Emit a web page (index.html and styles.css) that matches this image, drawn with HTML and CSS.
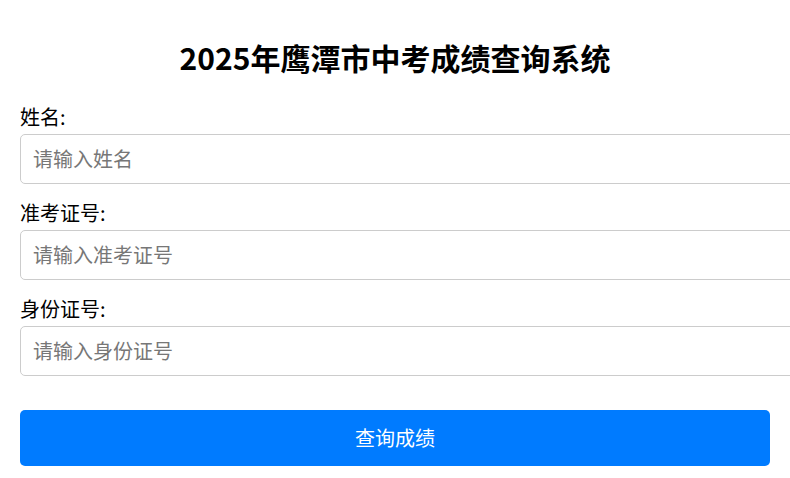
FILE: index.html
```html
<!DOCTYPE html>
<html lang="zh-CN">
<head>
  <meta charset="UTF-8">
  <title>2025年鹰潭市中考成绩查询系统</title>
  <link rel="stylesheet" href="styles.css">
</head>
<body>
  <div class="container">
    <h1>2025年鹰潭市中考成绩查询系统</h1>
    <form id="query-form">
      <div class="form-group">
        <label for="name">姓名:</label>
        <input type="text" id="name" placeholder="请输入姓名">
      </div>
      <div class="form-group">
        <label for="exam-no">准考证号:</label>
        <input type="text" id="exam-no" placeholder="请输入准考证号">
      </div>
      <div class="form-group">
        <label for="id-no">身份证号:</label>
        <input type="text" id="id-no" placeholder="请输入身份证号">
      </div>
      <button type="submit">查询成绩</button>
    </form>
  </div>
</body>
</html>
```

FILE: styles.css
```css
body {
  margin: 0;
  font-family: "Noto Sans CJK SC", "Noto Sans", sans-serif;
  background-color: #fff;
  color: #000;
}

.container {
  padding: 20px;
}

h1 {
  text-align: center;
  font-size: 30px;
  margin: 15px 0 24px;
}

.form-group {
  margin-bottom: 15px;
}

label {
  display: block;
  font-size: 20px;
  line-height: 28px;
  margin-bottom: 3px;
}

input {
  width: 100%;
  padding: 10px 12px;
  font-family: inherit;
  font-size: 20px;
  line-height: 28px;
  border: 1px solid #ccc;
  border-radius: 5px;
}

input::placeholder {
  color: #777;
}

button {
  display: block;
  width: 100%;
  margin-top: 34px;
  padding: 13px 0;
  font-family: inherit;
  font-size: 20px;
  line-height: 30px;
  color: white;
  background-color: #007bff;
  border: none;
  border-radius: 5px;
  cursor: pointer;
}
```
